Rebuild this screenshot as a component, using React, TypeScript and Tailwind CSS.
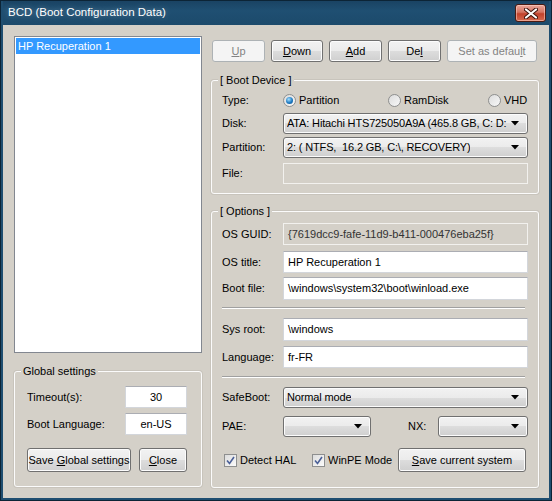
import type { ReactNode } from "react";

const font = "font-['Liberation_Sans',Arial,sans-serif]";

function Btn({ children, disabled, className = "" }: { children: ReactNode; disabled?: boolean; className?: string }) {
  return (
    <button
      type="button"
      className={`flex items-center justify-center rounded-[3px] border text-[11px] leading-none ${
        disabled
          ? "border-[#adb2b5] bg-[#f4f4f4] text-[#838383]"
          : "border-[#707070] bg-[linear-gradient(#f2f2f2_0%,#ebebeb_50%,#dddddd_50%,#cfcfcf_100%)] text-black shadow-[inset_0_0_0_1px_#fcfcfc]"
      } ${className}`}
    >
      <span className="whitespace-pre">{children}</span>
    </button>
  );
}

function Field({ value, disabled, center, className = "" }: { value?: string; disabled?: boolean; center?: boolean; className?: string }) {
  return (
    <div
      className={`flex items-center border px-[4px] text-[11px] ${center ? "justify-center" : ""} ${
        disabled
          ? "border-[#f2f1ee] bg-[#d4d0c8] text-[#333]"
          : "border-[#d3d6db] border-t-[#abadb3] bg-white text-black"
      } ${className}`}
    >
      {value}
    </div>
  );
}

function Combo({ value, className = "" }: { value?: string; className?: string }) {
  return (
    <div
      className={`flex items-center justify-between gap-[3px] rounded-[3px] border border-[#707070] bg-[linear-gradient(#f2f2f2_0%,#ebebeb_50%,#dddddd_50%,#cfcfcf_100%)] pl-[3px] pr-[8px] text-[11px] text-black shadow-[inset_0_0_0_1px_#fcfcfc] ${className}`}
    >
      <span className="min-w-0 overflow-hidden whitespace-pre tracking-[-0.15px]">{value}</span>
      <svg width="8" height="5" viewBox="0 0 8 5" className="shrink-0">
        <path d="M0 0h8L4 4.5z" fill="#000" />
      </svg>
    </div>
  );
}

function Radio({ checked, label }: { checked?: boolean; label: string }) {
  return (
    <div className="flex items-center gap-[3px]">
      <span className="flex h-[13px] w-[13px] items-center justify-center rounded-full border border-[#8e8f8f] bg-[linear-gradient(135deg,#dcdcdc,#f8f8f8)]">
        {checked && (
          <span className="h-[7px] w-[7px] rounded-full bg-[radial-gradient(circle_at_40%_35%,#a7e0ff,#1d7ac2_55%,#0b4e8a)]" />
        )}
      </span>
      <span>{label}</span>
    </div>
  );
}

function Check({ label }: { label: string }) {
  return (
    <div className="flex items-center gap-[3px]">
      <span className="flex h-[13px] w-[13px] items-center justify-center border border-[#8e8f8f] bg-[linear-gradient(135deg,#dcdcdc,#fbfbfb)]">
        <svg width="9" height="9" viewBox="0 0 9 9">
          <path d="M1 4.5l2.5 3L8 1" fill="none" stroke="#4a5f97" strokeWidth="1.6" />
        </svg>
      </span>
      <span>{label}</span>
    </div>
  );
}

function Group({ title, className = "", children }: { title: string; className?: string; children: ReactNode }) {
  return (
    <div className={`relative rounded-[3px] border border-[#fbfbfb] shadow-[0_0_0_1px_#c8c4bc] ${className}`}>
      <span className="absolute -top-[8px] left-[6px] bg-[#d4d0c8] px-[2px] text-[11px] leading-[14px]">{title}</span>
      {children}
    </div>
  );
}

function Row({ label, children, className = "" }: { label: string; children: ReactNode; className?: string }) {
  return (
    <div className={`flex items-center ${className}`}>
      <span className="w-[61px] shrink-0">{label}</span>
      {children}
    </div>
  );
}

function Sep({ className = "" }: { className?: string }) {
  return <div className={`mr-[3px] h-[2px] border-t border-b border-t-[#a0a0a0] border-b-white ${className}`} />;
}

export default function App() {
  return (
    <div className={`${font} h-[501px] w-[552px] overflow-hidden bg-[#0c2436] p-px text-[11px] text-black`}>
      <div className="flex h-full flex-col bg-[#1f4e70] px-[2px] pb-[2px]">
        <div className="flex h-[24px] shrink-0 items-center justify-between bg-[linear-gradient(#1a4363,#1f4f72_40%,#1c4a6b)] pl-[5px] pr-[3px]">
          <span className="text-[11.5px] text-white [text-shadow:0_0_6px_rgba(255,255,255,0.35)]">BCD (Boot Configuration Data)</span>
          <div className="flex h-[18px] w-[31px] items-center justify-center rounded-[3px] border border-[#4a1a12] bg-[linear-gradient(#eaa699,#d47462_45%,#c2412b_55%,#d56a4f)] shadow-[inset_0_0_0_1px_rgba(255,220,210,0.5)]">
            <svg width="14" height="11" viewBox="0 0 14 11">
              <path d="M2 1.5L12 9.5M12 1.5L2 9.5" stroke="#3a1008" strokeWidth="4" strokeLinecap="round" />
              <path d="M2 1.5L12 9.5M12 1.5L2 9.5" stroke="#fff" strokeWidth="2.2" strokeLinecap="round" />
            </svg>
          </div>
        </div>

        <div className="flex flex-1 gap-[9px] bg-[#d4d0c8] pl-[11px] pr-[10px] pt-[11px]">
          {/* left column */}
          <div className="flex w-[188px] shrink-0 flex-col">
            <div className="h-[317px] border border-[#828790] bg-white p-px">
              <div className="flex h-[16px] items-center bg-[#3399ff] pl-[2px] text-white">HP Recuperation 1</div>
            </div>

            <Group title="Global settings" className="mt-[18px] h-[116px] pl-[12px] pr-[14px] pt-[14px]">
              <div className="flex items-center justify-between">
                <span>Timeout(s):</span>
                <Field value="30" center className="h-[22px] w-[62px]" />
              </div>
              <div className="mt-[5px] flex items-center justify-between">
                <span>Boot Language:</span>
                <Field value="en-US" center className="h-[22px] w-[62px]" />
              </div>
              <div className="mt-[13px] flex gap-[8px]">
                <Btn className="h-[24px] w-[106px]">
                  Save <u>G</u>lobal settings
                </Btn>
                <Btn className="h-[24px] w-[49px]">
                  <u>C</u>lose
                </Btn>
              </div>
            </Group>
          </div>

          {/* right column */}
          <div className="flex w-[328px] shrink-0 flex-col">
            <div className="mt-[4px] flex gap-[6px] pl-px">
              <Btn disabled className="h-[22px] w-[53px]">
                <u>U</u>p
              </Btn>
              <Btn className="h-[22px] w-[52px]">
                <u>D</u>own
              </Btn>
              <Btn className="h-[22px] w-[53px]">
                <u>A</u>dd
              </Btn>
              <Btn className="h-[22px] w-[53px]">
                De<u>l</u>
              </Btn>
              <Btn disabled className="h-[22px] w-[90px]">
                Set as defau<u>l</u>t
              </Btn>
            </div>

            <Group title="[ Boot Device ]" className="mt-[18px] h-[114px] pl-[10px] pr-[10px] pt-[9px]">
              <Row label="Type:" className="h-[20px]">
                <div className="w-[105px]">
                  <Radio checked label="Partition" />
                </div>
                <div className="w-[100px]">
                  <Radio label="RamDisk" />
                </div>
                <Radio label="VHD" />
              </Row>
              <Row label="Disk:" className="mt-[3px]">
                <Combo value="ATA: Hitachi HTS725050A9A (465.8 GB, C: D:" className="h-[21px] min-w-0 flex-1" />
              </Row>
              <Row label="Partition:" className="mt-[3px]">
                <Combo value="2: ( NTFS,  16.2 GB, C:\, RECOVERY)" className="h-[21px] min-w-0 flex-1" />
              </Row>
              <Row label="File:" className="mt-[5px]">
                <Field disabled className="h-[21px] flex-1" />
              </Row>
            </Group>

            <Group title="[ Options ]" className="mt-[17px] h-[277px] pl-[10px] pr-[10px] pt-[11px]">
              <Row label="OS GUID:">
                <Field disabled value="{7619dcc9-fafe-11d9-b411-000476eba25f}" className="h-[22px] flex-1" />
              </Row>
              <Row label="OS title:" className="mt-[6px]">
                <Field value="HP Recuperation 1" className="h-[22px] flex-1" />
              </Row>
              <Row label="Boot file:" className="mt-[4px]">
                <Field value="\windows\system32\boot\winload.exe" className="h-[23px] flex-1" />
              </Row>
              <Sep className="mt-[7px]" />
              <Row label="Sys root:" className="mt-[9px]">
                <Field value="\windows" className="h-[23px] flex-1" />
              </Row>
              <Row label="Language:" className="mt-[5px]">
                <Field value="fr-FR" className="h-[22px] flex-1" />
              </Row>
              <Sep className="mt-[8px]" />
              <Row label="SafeBoot:" className="mt-[9px]">
                <Combo value="Normal mode" className="h-[21px] flex-1" />
              </Row>
              <Row label="PAE:" className="mt-[8px]">
                <Combo className="h-[21px] w-[88px]" />
                <span className="ml-[37px] w-[30px]">NX:</span>
                <Combo className="h-[21px] w-[90px]" />
              </Row>
              <div className="mt-[11px] flex items-center pl-[2px]">
                <div className="w-[88px]">
                  <Check label="Detect HAL" />
                </div>
                <div className="w-[86px]">
                  <Check label="WinPE Mode" />
                </div>
                <Btn className="h-[24px] w-[128px]">
                  <u>S</u>ave current system
                </Btn>
              </div>
            </Group>
          </div>
        </div>
      </div>
    </div>
  );
}
